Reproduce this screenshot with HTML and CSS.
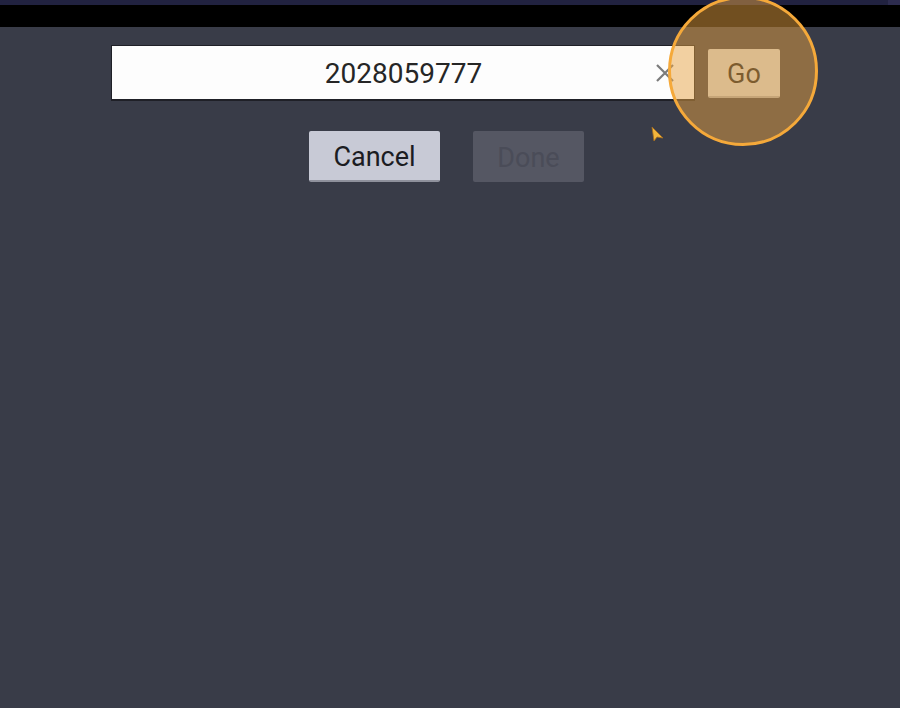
FILE: index.html
```html
<!DOCTYPE html>
<html lang="en">
<head>
  <meta charset="UTF-8" />
  <meta name="viewport" content="width=device-width, initial-scale=1.0"/>
  <title>Dial</title>
  <link rel="stylesheet" href="styles.css">
</head>
<body>

  <div class="status-strip">
    <div class="strip-main"></div>
    <div class="strip-end"></div>
  </div>
  <div class="black-band"></div>

  <div class="screen">
    <div class="entry-row">
      <div class="number-field">
        <span class="number-text">2028059777</span>
        <svg class="clear-icon" width="20" height="20" viewBox="0 0 20 20">
          <path d="M2 2 L18 18 M18 2 L2 18" stroke="#7b7b7b" stroke-width="2.2" fill="none"/>
        </svg>
      </div>
      <button class="btn btn-go">Go</button>
    </div>

    <div class="action-row">
      <button class="btn btn-cancel">Cancel</button>
      <button class="btn btn-done">Done</button>
    </div>

    <!-- tap highlight over the Go button -->
    <div class="tap-ring"></div>
    <svg class="pointer" width="14" height="16" viewBox="0 0 14 16">
      <path d="M1 1 L12 12 L6 11 L3 15 Z" fill="#f2b53c" stroke="#a86f1e" stroke-width="0.8"/>
    </svg>
  </div>

</body>
</html>
```

FILE: styles.css
```css
/* --- page --- */
body {
  margin: 0;
  background-color: #393c48;
  font-family: Roboto, "Noto Sans", sans-serif;
  -webkit-font-smoothing: antialiased;
  overflow: hidden;
}

/* --- top strips --- */
.status-strip {
  display: flex;
  height: 5px;
}
.strip-main {
  flex: 1;
  background-color: #212240;
}
.strip-end {
  width: 12px;
  background-color: #2d2c4f;
}
.black-band {
  height: 22px;
  background-color: #000;
}

/* --- main area --- */
.screen {
  position: relative;
  height: 681px;
}

.entry-row {
  display: flex;
  align-items: center;
  padding: 18px 0 0 111px;
}

.number-field {
  position: relative;
  width: 584px;
  height: 56px;
  box-sizing: border-box;
  background-color: #fdfdfd;
  border: 1px solid #1f2027;
  border-bottom-width: 2px;
  display: flex;
  align-items: center;
  justify-content: center;
}
.number-text {
  font-size: 28px;
  color: #262626;
  margin: 2px 0 0 1px;
}
.clear-icon {
  position: absolute;
  right: 19px;
  top: 17px;
}

/* --- buttons --- */
.btn {
  font-family: Roboto, "Noto Sans", sans-serif;
  font-size: 27px;
  border: none;
  border-radius: 2px;
  padding: 3px 0 0;
  box-sizing: border-box;
}
.btn-go {
  margin-left: 13px;
  width: 72px;
  height: 49px;
  background-color: #d2d5d4;
  color: #161a1f;
  border-bottom: 2px solid #a7a9ad;
}

.action-row {
  display: flex;
  gap: 33px;
  padding: 30px 0 0 309px;
}
.btn-cancel {
  width: 131px;
  height: 51px;
  background-color: #c8cad6;
  color: #1b1c22;
  border-bottom: 2px solid #8f919c;
}
.btn-done {
  width: 111px;
  height: 51px;
  background-color: #555763;
  color: #4a4c58;
}

/* --- tap highlight & pointer --- */
.tap-ring {
  position: absolute;
  left: 668px;
  top: -31px;
  width: 150px;
  height: 150px;
  box-sizing: border-box;
  border-radius: 50%;
  border: 3px solid #f5a93a;
  background-color: rgba(230, 161, 65, 0.49);
}
.pointer {
  position: absolute;
  left: 651px;
  top: 99px;
}
```
